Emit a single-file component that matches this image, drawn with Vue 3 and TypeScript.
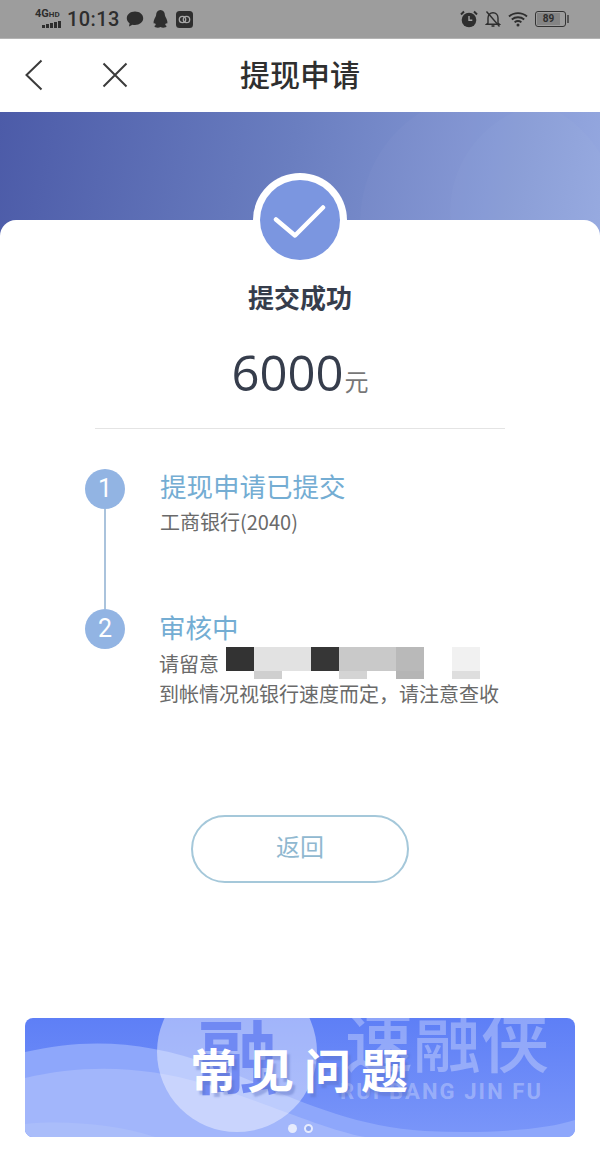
<script setup lang="ts">
const steps = [
  { no: 1, title: '提现申请已提交', lines: ['工商银行(2040)'] },
  { no: 2, title: '审核中', lines: ['请留意', '到帐情况视银行速度而定，请注意查收'] },
]

// smudged-out part of the notice line, u = tint of the smear underneath
const smudge = [
  { w: 28, c: '#333333', u: '#ffffff' },
  { w: 28, c: '#e2e2e2', u: '#cfcfcf' },
  { w: 29, c: '#e2e2e2', u: '#ffffff' },
  { w: 28, c: '#363636', u: '#ffffff' },
  { w: 28, c: '#c9c9c9', u: '#d4d4d4' },
  { w: 29, c: '#c9c9c9', u: '#ffffff' },
  { w: 28, c: '#b9b9b9', u: '#b5b5b5' },
  { w: 28, c: '#ffffff', u: '#ffffff' },
  { w: 28, c: '#f1f1f1', u: '#dedede' },
]
</script>

<template>
  <div class="page">
    <div class="status">
      <div class="status-left">
        <div class="net">
          <span class="net-text">4G<small>HD</small></span>
          <svg width="20" height="7" viewBox="0 0 20 7">
            <rect x="0" y="4" width="3" height="3" fill="#2e2e2e" />
            <rect x="4" y="3" width="3" height="4" fill="#2e2e2e" />
            <rect x="8" y="2" width="3" height="5" fill="#2e2e2e" />
            <rect x="12" y="1" width="3" height="6" fill="#2e2e2e" />
            <rect x="16" y="0" width="3" height="7" fill="#2e2e2e" />
          </svg>
        </div>
        <span class="time">10:13</span>
        <svg class="ic" width="18" height="16" viewBox="0 0 18 16">
          <path d="M9 0.500c4.600 0 8.200 2.900 8.200 6.800S13.600 14 9 14c-.9 0-1.700-.1-2.500-.3L3 15.500l.6-3.300C1.800 11 .8 9.300.8 7.300.8 3.400 4.400.5 9 .5z" fill="#2e2e2e" />
        </svg>
        <svg class="ic qq" width="15" height="18" viewBox="0 0 15 18">
          <path d="M7.500 0C10.300 0 11.800 2.200 11.900 5c0 .8.300 1.300.8 2.200.9 1.500 1.800 3.700 1.700 5.500-.1 1.100-.7 1.100-1.400.2-.2.900-.6 1.500-1 2 .9.400 1.500.8 1.500 1.400 0 1-1.600 1.400-3.300 1.400-1 0-2-.2-2.700-.7-.7.500-1.700.7-2.700.7C3.100 17.700 1.500 17.300 1.500 16.300c0-.6.600-1 1.500-1.400-.4-.5-.8-1.100-1-2-.7.900-1.300.9-1.400-.2-.1-1.800.8-4 1.700-5.500.5-.9.800-1.400.8-2.200C3.200 2.200 4.700 0 7.500 0z" fill="#2e2e2e" />
        </svg>
        <svg class="ic app" width="17" height="17" viewBox="0 0 17 17">
          <rect width="17" height="17" rx="3.500" fill="#2e2e2e" />
          <circle cx="6.500" cy="8.500" r="3.200" fill="none" stroke="#a5a5a5" stroke-width="1.300" />
          <circle cx="10.500" cy="8.500" r="3.200" fill="none" stroke="#a5a5a5" stroke-width="1.300" />
        </svg>
      </div>
      <div class="status-right">
        <svg width="18" height="18" viewBox="0 0 18 18">
          <circle cx="9" cy="10" r="7.300" fill="#2e2e2e" />
          <path d="M9 6v4.300h3.300" fill="none" stroke="#a5a5a5" stroke-width="1.400" />
          <path d="M1 4.500 4 1.500M17 4.500 14 1.500" stroke="#2e2e2e" stroke-width="2" />
        </svg>
        <svg width="16" height="18" viewBox="0 0 16 18">
          <path d="M3 13V8c0-3 2-5.300 5-5.300S13 5 13 8v5l1.500 1.300h-13L3 13z" fill="none" stroke="#2e2e2e" stroke-width="1.400" />
          <path d="M6.500 16h3" stroke="#2e2e2e" stroke-width="1.600" />
          <path d="M1.500 1.500 14.500 16.500" stroke="#2e2e2e" stroke-width="1.400" />
        </svg>
        <svg width="20" height="16" viewBox="0 0 20 16">
          <path d="M1 5.500C6 1 14 1 19 5.500M3.800 8.500C7.300 5.500 12.700 5.500 16.200 8.500M6.600 11.300C8.600 9.800 11.400 9.800 13.400 11.300" fill="none" stroke="#2e2e2e" stroke-width="1.800" />
          <circle cx="10" cy="14" r="1.500" fill="#2e2e2e" />
        </svg>
        <div class="battery"><span class="battery-fill">89</span></div>
      </div>
    </div>

    <div class="nav">
      <div class="nav-icons">
        <svg width="18" height="32" viewBox="0 0 18 32">
          <path d="M16.500 1.500 1.500 16l15 14.500" fill="none" stroke="#3b3b3b" stroke-width="2" />
        </svg>
        <svg width="26" height="26" viewBox="0 0 26 26">
          <path d="M1.500 1.500l23 23M24.500 1.500l-23 23" fill="none" stroke="#3b3b3b" stroke-width="2" />
        </svg>
      </div>
      <span class="nav-title">提现申请</span>
    </div>

    <div class="hero">
      <i class="arc arc-a"></i>
      <i class="arc arc-b"></i>
    </div>

    <div class="card">
      <div class="badge">
        <div class="badge-in">
          <svg width="54" height="38" viewBox="0 0 54 38">
            <path d="M3 18.500 22 34.500 50 6.500" fill="none" stroke="#fff" stroke-width="4.500" stroke-linecap="round" stroke-linejoin="round" />
          </svg>
        </div>
      </div>
      <h1 class="result">提交成功</h1>
      <div class="amount"><b>6000</b><span>元</span></div>
      <div class="divider"></div>

      <div class="steps">
        <div v-for="s in steps" :key="s.no" class="step">
          <div class="rail">
            <div class="num">{{ s.no }}</div>
          </div>
          <div class="step-body">
            <div class="step-title">{{ s.title }}</div>
            <div v-for="(l, i) in s.lines" :key="i" class="step-line">
              {{ l }}
              <div v-if="s.no === 2 && i === 0" class="smudge">
                <i v-for="(b, j) in smudge" :key="j" :style="{ width: b.w + 'px', background: b.c }">
                  <em :style="{ background: b.u }"></em>
                </i>
              </div>
            </div>
          </div>
        </div>
      </div>

      <button class="back" type="button">返回</button>

      <div class="banner">
        <svg class="waves" width="550" height="119" viewBox="0 0 550 119" preserveAspectRatio="none">
          <path d="M0 34C60 20 120 22 190 48 260 76 320 108 400 113 460 116 520 112 550 102V119H0z" fill="#8ea7fb" />
          <path d="M0 60C60 46 120 48 180 66 240 84 300 112 340 119H0z" fill="#a2b6fb" />
          <path d="M0 106C40 102 90 106 130 119H0z" fill="#aabdfa" />
        </svg>
        <i class="bubble"></i>
        <span class="mark-a">融</span>
        <span class="mark-b">速融侠</span>
        <span class="mark-c">RUI BANG JIN FU</span>
        <span class="banner-title">常见问题</span>
        <div class="dots"><i></i><i class="ring"></i></div>
      </div>
    </div>
  </div>
</template>

<style>
html,
body {
  margin: 0;
  background: #fff;
}
</style>

<style scoped>
.page {
  width: 600px;
  height: 1170px;
  overflow: hidden;
  display: flex;
  flex-direction: column;
  font-family: "Noto Sans CJK SC", Roboto, sans-serif;
  background: #fff;
}

.status {
  height: 38px;
  flex: none;
  background: #9d9d9d;
  border-bottom: 1px solid #b4b4b4;
  display: flex;
  justify-content: space-between;
  align-items: center;
  padding: 0 34px 0 35px;
  color: #2e2e2e;
}

.status-left,
.status-right {
  display: flex;
  align-items: center;
}

.status-right {
  gap: 7px;
}

.net {
  width: 27px;
  display: flex;
  flex-direction: column;
  align-items: flex-end;
  line-height: 1;
  margin-top: -1px;
}

.net-text {
  font: 700 11px/10px Roboto, sans-serif;
  white-space: nowrap;
  width: 27px;
  margin-bottom: 1px;
}

.net-text small {
  font-size: 8px;
}

.time {
  font: 500 20px/24px Roboto, sans-serif;
  margin-left: 5px;
  letter-spacing: 0.4px;
}

.ic {
  margin-left: 6px;
}

.qq {
  margin-left: 9px;
}

.app {
  margin-left: 8px;
}

.battery {
  width: 31px;
  height: 16px;
  border: 1px solid #333;
  border-radius: 3px;
  padding: 1px;
  box-sizing: border-box;
  position: relative;
}

.battery::after {
  content: "";
  position: absolute;
  right: -4px;
  top: 3px;
  width: 2px;
  height: 8px;
  background: #555;
}

.battery-fill {
  display: block;
  width: 86%;
  height: 100%;
  background: #848484;
  font: 700 10px/12px Roboto, sans-serif;
  text-align: center;
  color: #2e2e2e;
}

.nav {
  height: 73px;
  flex: none;
  position: relative;
  display: flex;
  align-items: center;
  justify-content: center;
}

.nav-icons {
  position: absolute;
  left: 25px;
  top: 20px;
  display: flex;
  align-items: center;
  gap: 59px;
}

.nav-title {
  font-size: 30px;
  font-weight: 500;
  color: #2f2f2f;
  line-height: 40px;
  margin-top: -6px;
}

.hero {
  height: 128px;
  flex: none;
  position: relative;
  overflow: hidden;
  background: linear-gradient(100deg, #4c5ba8 0%, #6a7ec0 48%, #93a6e0 100%);
}

.arc {
  position: absolute;
  border-radius: 50%;
  background: rgba(255, 255, 255, 0.025);
}

.arc-a {
  width: 260px;
  height: 260px;
  left: 360px;
  top: -20px;
}

.arc-b {
  width: 220px;
  height: 220px;
  left: 450px;
  top: -10px;
}

.card {
  flex: 1;
  margin-top: -20px;
  position: relative;
  background: #fff;
  border-radius: 16px 16px 0 0;
  display: flex;
  flex-direction: column;
  align-items: center;
}

.badge {
  width: 94px;
  height: 94px;
  margin-top: -47px;
  border-radius: 50%;
  background: #fff;
  display: flex;
  align-items: center;
  justify-content: center;
}

.badge-in {
  width: 80px;
  height: 80px;
  border-radius: 50%;
  background: #7b96e0;
  display: flex;
  align-items: center;
  justify-content: center;
}

.result {
  margin: 12px 0 0;
  font-size: 26px;
  line-height: 36px;
  font-weight: 700;
  color: #363d4c;
}

.amount {
  margin-top: 27px;
  height: 60px;
  display: flex;
  align-items: baseline;
  color: #363d4c;
}

.amount b {
  font: 400 49px/60px "Open Sans", sans-serif;
}

.amount span {
  font-size: 24px;
  color: #777;
  margin-left: 1px;
}

.divider {
  width: 410px;
  height: 1px;
  margin-top: 26px;
  background: #e4e4e4;
}

.steps {
  width: 100%;
  margin-top: 40px;
  display: flex;
  flex-direction: column;
}

.step {
  height: 140px;
  display: flex;
  padding-left: 85px;
}

.rail {
  width: 40px;
  display: flex;
  flex-direction: column;
  align-items: center;
}

.step:first-child .rail::after {
  content: "";
  width: 2px;
  flex: 1;
  background: #aac3dc;
}

.num {
  width: 40px;
  height: 40px;
  flex: none;
  border-radius: 50%;
  background: #92b4e3;
  color: #fff;
  font: 400 25px/40px Roboto, sans-serif;
  text-align: center;
}

.step-body {
  margin-left: 35px;
  margin-top: -2px;
}

.step:last-child .step-body {
  margin-left: 34px;
  margin-top: -1px;
}

.step-title {
  font-size: 26.5px;
  line-height: 38px;
  color: #74add3;
}

.step-line {
  position: relative;
  font-size: 20px;
  line-height: 30px;
  margin-top: 2px;
  color: #6a6a6a;
  white-space: nowrap;
}

.step:last-child .step-title {
  margin-bottom: 3px;
}

.step-line + .step-line {
  margin-top: 0;
}

.smudge {
  position: absolute;
  left: 67px;
  top: -2px;
  height: 32px;
  display: flex;
  filter: blur(0.7px);
}

.smudge i {
  display: block;
  height: 24px;
}

.smudge em {
  display: block;
  height: 8px;
  margin-top: 24px;
}

.back {
  width: 218px;
  height: 68px;
  margin-top: 66px;
  padding: 0 0 6px;
  border: 2px solid #a5c8da;
  border-radius: 34px;
  background: #fff;
  font-family: inherit;
  font-size: 24px;
  line-height: 1;
  color: #90b8d0;
}

.banner {
  width: 550px;
  height: 119px;
  margin-top: 135px;
  position: relative;
  overflow: hidden;
  border-radius: 8px;
  background: linear-gradient(180deg, #5e7ff6 0%, #7a96f9 100%);
}

.waves {
  position: absolute;
  left: 0;
  top: 0;
}

.bubble {
  position: absolute;
  left: 132px;
  top: -46px;
  width: 160px;
  height: 160px;
  border-radius: 50%;
  background: rgba(255, 255, 255, 0.42);
}

.mark-a,
.mark-b,
.mark-c,
.banner-title {
  position: absolute;
  white-space: nowrap;
}

.mark-a {
  left: 173px;
  top: -16px;
  font-size: 80px;
  line-height: 100px;
  font-weight: 700;
  color: #7089f3;
}

.mark-b {
  left: 320px;
  top: -26px;
  font-size: 68px;
  line-height: 92px;
  font-weight: 500;
  color: rgba(255, 255, 255, 0.3);
}

.mark-c {
  left: 315px;
  top: 61px;
  font: 700 22px/26px Roboto, sans-serif;
  letter-spacing: 2.1px;
  color: rgba(255, 255, 255, 0.3);
}

.banner-title {
  left: 165px;
  top: 20px;
  font-size: 47px;
  line-height: 60px;
  font-weight: 700;
  letter-spacing: 10px;
  color: #fff;
  text-shadow: 3px 4px 2px rgba(90, 110, 190, 0.4);
}

.dots {
  position: absolute;
  left: 263px;
  bottom: 4px;
  display: flex;
  gap: 7px;
}

.dots i {
  width: 9px;
  height: 9px;
  border-radius: 50%;
  background: #e6ebfd;
  box-sizing: border-box;
}

.dots .ring {
  background: #8ea6ee;
  border: 2px solid #e6ebfd;
}
</style>
